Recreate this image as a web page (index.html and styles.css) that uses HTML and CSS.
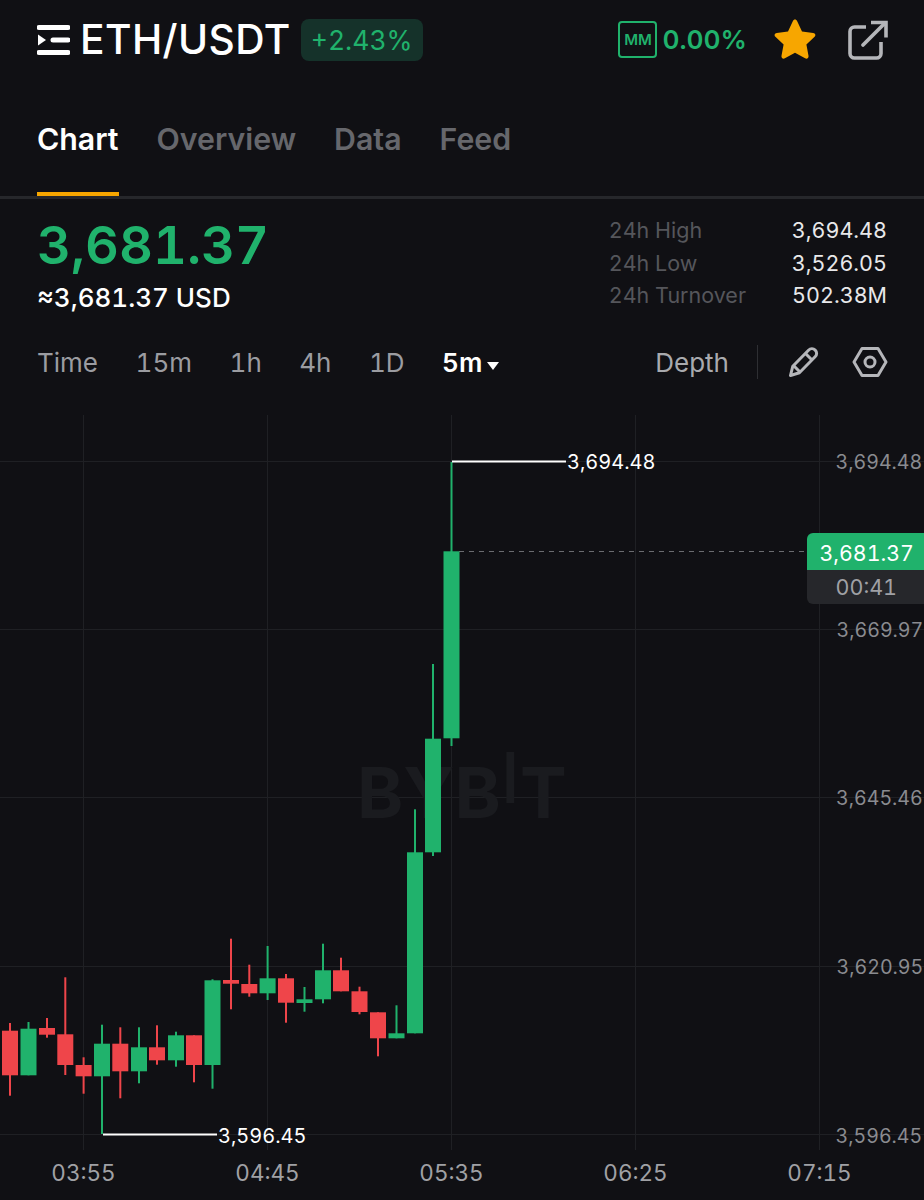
FILE: index.html
```html
<!DOCTYPE html>
<html lang="en">
<head>
<meta charset="utf-8">
<title>ETH/USDT</title>
<link rel="stylesheet" href="styles.css">
</head>
<body>
<div class="page">
  <header class="topbar">
    <div class="pair">
      <svg class="menu-icon" viewBox="0 0 33 30" width="33" height="30"><path d="M2 2.500h29M16 15h15M2 27.500h29" fill="none" stroke="#fff" stroke-width="5" stroke-linecap="round"/><path d="M1 9.500l8 5.500-8 5.500z" fill="#fff"/></svg>
      <span class="pair-name">ETH/USDT</span>
      <span class="change">+2.43%</span>
    </div>
    <div class="actions">
      <div class="mm">
        <span class="mm-box">MM</span>
        <span class="mm-value">0.00%</span>
      </div>
      <svg class="star" viewBox="0 2 44 41" width="44" height="41"><path d="M22 2.500c1 0 1.700.6 2.200 1.700l4.800 10.300 11.200 1.500c2.200.3 2.900 2.300 1.400 3.800l-8.200 7.800 2.100 11.200c.4 2.200-1.500 3.500-3.400 2.500L22 35.700l-10.100 5.600c-1.900 1-3.800-.3-3.400-2.500l2.100-11.200-8.200-7.800c-1.500-1.500-.8-3.500 1.400-3.800L15 14.500l4.800-10.300c.5-1.100 1.200-1.700 2.200-1.700z" fill="#f7a600"/></svg>
      <svg class="share" viewBox="0 0 40 40" width="40" height="40"><path d="M18 7H6.500A4.500 4.500 0 0 0 2 11.500v22A4.500 4.500 0 0 0 6.500 38h22a4.500 4.500 0 0 0 4.500-4.500V22" fill="none" stroke="#b5b6ba" stroke-width="3.600"/><path d="M15 25L36 4" fill="none" stroke="#b5b6ba" stroke-width="3.800" stroke-linecap="round"/><path d="M23 2.500h15v15" fill="none" stroke="#b5b6ba" stroke-width="3.600"/></svg>
    </div>
  </header>

  <nav class="tabs">
    <a class="tab tab-active">Chart</a>
    <a class="tab">Overview</a>
    <a class="tab">Data</a>
    <a class="tab">Feed</a>
  </nav>

  <section class="quote">
    <div class="price-block">
      <div class="price">3,681.37</div>
      <div class="usd">≈3,681.37 USD</div>
    </div>
    <dl class="stats">
      <dt>24h High</dt><dd>3,694.48</dd>
      <dt>24h Low</dt><dd>3,526.05</dd>
      <dt>24h Turnover</dt><dd>502.38M</dd>
    </dl>
  </section>

  <section class="intervals">
    <span class="interval">Time</span>
    <span class="interval">15m</span>
    <span class="interval">1h</span>
    <span class="interval">4h</span>
    <span class="interval">1D</span>
    <span class="interval interval-active">5m<i class="caret"></i></span>
    <div class="tools">
      <span class="depth">Depth</span>
      <span class="tool-sep"></span>
      <svg class="pencil" viewBox="0 0 32 32" width="32" height="32"><path d="M2.500 29.500l2.300-9.300L20.500 4.200c2-2 4.800-2 6.700-.1s1.900 4.700-.1 6.700L11.400 26.700z" fill="none" stroke="#b5b6ba" stroke-width="3" stroke-linejoin="round"/><path d="M5.500 19.500l7 7M17.500 7.500l7 7" fill="none" stroke="#b5b6ba" stroke-width="3"/></svg>
      <svg class="hex" viewBox="0 0 36 32" width="36" height="32"><path d="M10 2.500h16L34 16l-8 13.500H10L2 16z" fill="none" stroke="#b5b6ba" stroke-width="3" stroke-linejoin="round"/><circle cx="18" cy="16" r="5" fill="none" stroke="#b5b6ba" stroke-width="3"/></svg>
    </div>
  </section>

  <svg class="chart" viewBox="0 405 924 795" width="924" height="795">
    <g class="grid">
      <path d="M0 461.500H924M0 629.500H924M0 797.500H924M0 966.500H924M0 1134.500H924"/>
      <path d="M83.500 415V1150M267.500 415V1150M451.500 415V1150M635.500 415V1150M819.500 415V1150"/>
    </g>
    <text class="watermark" x="357" y="818">BYB<tspan class="watermark-i" dy="-15">I</tspan><tspan dy="15">T</tspan></text>
    <path class="last-line" d="M459 551.500H808"/>
    <g id="candles"></g>
    <path class="extreme" d="M452 461.500H566M103 1134.500H217"/>
    <text class="extreme-label" x="567" y="469">3,694.48</text>
    <text class="extreme-label" x="218" y="1143">3,596.45</text>
    <g class="axis">
      <text x="835.500" y="469">3,694.48</text>
      <text x="836.500" y="637">3,669.97</text>
      <text x="836" y="805">3,645.46</text>
      <text x="836.500" y="974">3,620.95</text>
      <text x="835.500" y="1143">3,596.45</text>
    </g>
    <path class="tag-timer" d="M807 570H924V604H813a6 6 0 0 1-6-6z"/>
    <path class="tag-price" d="M813 533H924V570H807V539a6 6 0 0 1 6-6z"/>
    <text class="tag-price-text" x="819.500" y="561">3,681.37</text>
    <text class="tag-timer-text" x="835.500" y="595">00:41</text>
    <g class="times">
      <text x="83.500" y="1181">03:55</text>
      <text x="267.500" y="1181">04:45</text>
      <text x="451.500" y="1181">05:35</text>
      <text x="635.500" y="1181">06:25</text>
      <text x="819.500" y="1181">07:15</text>
    </g>
  </svg>
</div>
<script src="chart.js"></script>
</body>
</html>
```

FILE: chart.js
```js
var G = "#20b26c", R = "#ef454a";
var data = [
  [10, R, 1023, 1030.7, 1075.3, 1095.7],
  [28.5, G, 1022, 1028.7, 1075.3, 1075.3],
  [47, R, 1018, 1028, 1034.7, 1037.7],
  [65.3, R, 977.3, 1034.3, 1065, 1075],
  [83.6, R, 1057.3, 1065, 1076.3, 1093.7],
  [102, G, 1024.7, 1043.7, 1076.3, 1134],
  [120.3, R, 1027.3, 1043.7, 1071.3, 1098.3],
  [139, G, 1027.3, 1047.3, 1071.3, 1083.3],
  [157, R, 1025.3, 1047.3, 1060.3, 1064.7],
  [176, G, 1031.7, 1035.3, 1060.3, 1066.7],
  [194, R, 1035.3, 1035.3, 1065, 1082.3],
  [212.5, G, 979.3, 980.3, 1065, 1088.7],
  [231, R, 938.7, 980, 983.7, 1009.3],
  [249.3, R, 964.7, 984, 993.3, 996.7],
  [267.6, G, 946, 978.3, 993.3, 1000],
  [286, R, 974, 978.3, 1002.7, 1022.7],
  [304.5, G, 987, 999.3, 1003, 1011.7],
  [323, G, 943.7, 970.3, 999.3, 1003.3],
  [341, R, 957.7, 970.3, 991.3, 991.3],
  [359.5, R, 986.7, 991.3, 1012, 1014.3],
  [378, R, 1012.3, 1012.3, 1038.3, 1056.3],
  [396.5, G, 1005.3, 1033.3, 1038.3, 1038.3],
  [415, G, 809.3, 852.3, 1033.3, 1033.3],
  [433, G, 664, 738.7, 852.3, 856],
  [451.5, G, 462, 551.3, 738.3, 746]
];
var NS = "http://www.w3.org/2000/svg";
var host = document.getElementById("candles");
function rect(x, y, w, h, fill) {
  var r = document.createElementNS(NS, "rect");
  r.setAttribute("x", x);
  r.setAttribute("y", y);
  r.setAttribute("width", w);
  r.setAttribute("height", h);
  r.setAttribute("fill", fill);
  host.appendChild(r);
}
data.forEach(function (c) {
  rect(c[0] - 1, c[2], 2, c[5] - c[2], c[1]);
  rect(c[0] - 8, c[3], 16, c[4] - c[3], c[1]);
});
```

FILE: styles.css
```css
* { box-sizing: border-box; }
html, body { margin: 0; padding: 0; background: #101014; }
body { font-family: "Inter", "Liberation Sans", sans-serif; color: #fff; font-variant-numeric: tabular-nums; }
.page { width: 924px; height: 1200px; overflow: hidden; background: #101014; }

.topbar { height: 79px; padding: 0 36px 0 37px; display: flex; align-items: center; justify-content: space-between; }
.pair { display: flex; align-items: center; }
.menu-icon { display: block; }
.pair-name { margin-left: 10px; font-size: 40.700px; font-weight: 500; line-height: 44px; letter-spacing: .4px; }
.change { margin-left: 10px; height: 42px; padding: 0 10px; background: #15322a; border-radius: 8px; color: #20b26c; font-size: 26.500px; line-height: 42px; }
.actions { display: flex; align-items: center; }
.mm { display: flex; align-items: center; }
.mm-box { width: 39px; height: 37px; border: 2px solid #20b26c; border-radius: 4px; color: #20b26c; font-size: 15px; font-weight: 600; line-height: 33px; text-align: center; }
.mm-value { margin-left: 5px; color: #20b26c; font-size: 26.300px; font-weight: 600; }
.star { margin-left: 26px; }
.share { margin-left: 31px; }

.tabs { height: 120px; padding: 0 37px 0; display: flex; gap: 38px; border-bottom: 3px solid #26272b; align-items: stretch; }
.tab { height: 117px; padding-top: 40px; font-size: 30.300px; font-weight: 600; line-height: 40px; color: #66676c; }
.tab-active { color: #fff; border-bottom: 4px solid #f7a600; height: 117px; }

.quote { padding: 15px 37px 0; height: 128px; display: flex; justify-content: space-between; }
.price-block { margin-top: 1px; }
.price { font-size: 52.500px; font-weight: 600; line-height: 60px; color: #20b26c; }
.usd { margin-top: 7px; font-size: 26px; font-weight: 500; line-height: 32px; }
.stats { margin: 0; display: grid; grid-template-columns: auto 141px; grid-auto-rows: 32.500px; font-size: 21.500px; line-height: 32px; }
.stats dt { color: #55565b; }
.stats dd { margin: 0; text-align: right; color: #e8e8ea; }

.intervals { height: 70px; margin-bottom: 8px; padding: 0 36px 0 37px; display: flex; align-items: center; gap: 37.500px; font-size: 26px; color: #9b9ca1; }
.interval-active { color: #fff; font-weight: 600; }
.caret { display: inline-block; margin-left: 5px; vertical-align: 2px; border: 6px solid transparent; border-top: 8px solid #fff; border-bottom: 0; }
.tools { margin-left: auto; display: flex; align-items: center; }
.depth { color: #a9aaae; }
.tool-sep { width: 1px; height: 34px; margin-left: 28px; background: #2e2f33; }
.pencil { margin-left: 30px; }
.hex { margin-left: 32px; }

.chart { display: block; }
.grid path { fill: none; stroke: #1f2024; stroke-width: 1; }
.watermark { font-size: 70px; font-weight: 700; fill: #1a1b1f; }
.watermark-i { font-weight: 500; }
.last-line { fill: none; stroke: #6b6c70; stroke-width: 1; stroke-dasharray: 5 5; }
.extreme { fill: none; stroke: #fff; stroke-width: 2; }
.extreme-label { font-size: 20px; fill: #fff; }
.axis text { font-size: 19.600px; fill: #8a8b90; }
.tag-price { fill: #20b26c; }
.tag-timer { fill: #26272b; }
.tag-price-text { font-size: 21.300px; fill: #fff; }
.tag-timer-text { font-size: 21.500px; fill: #a0a1a5; }
.times text { font-size: 22.500px; fill: #a0a1a5; text-anchor: middle; }
```
